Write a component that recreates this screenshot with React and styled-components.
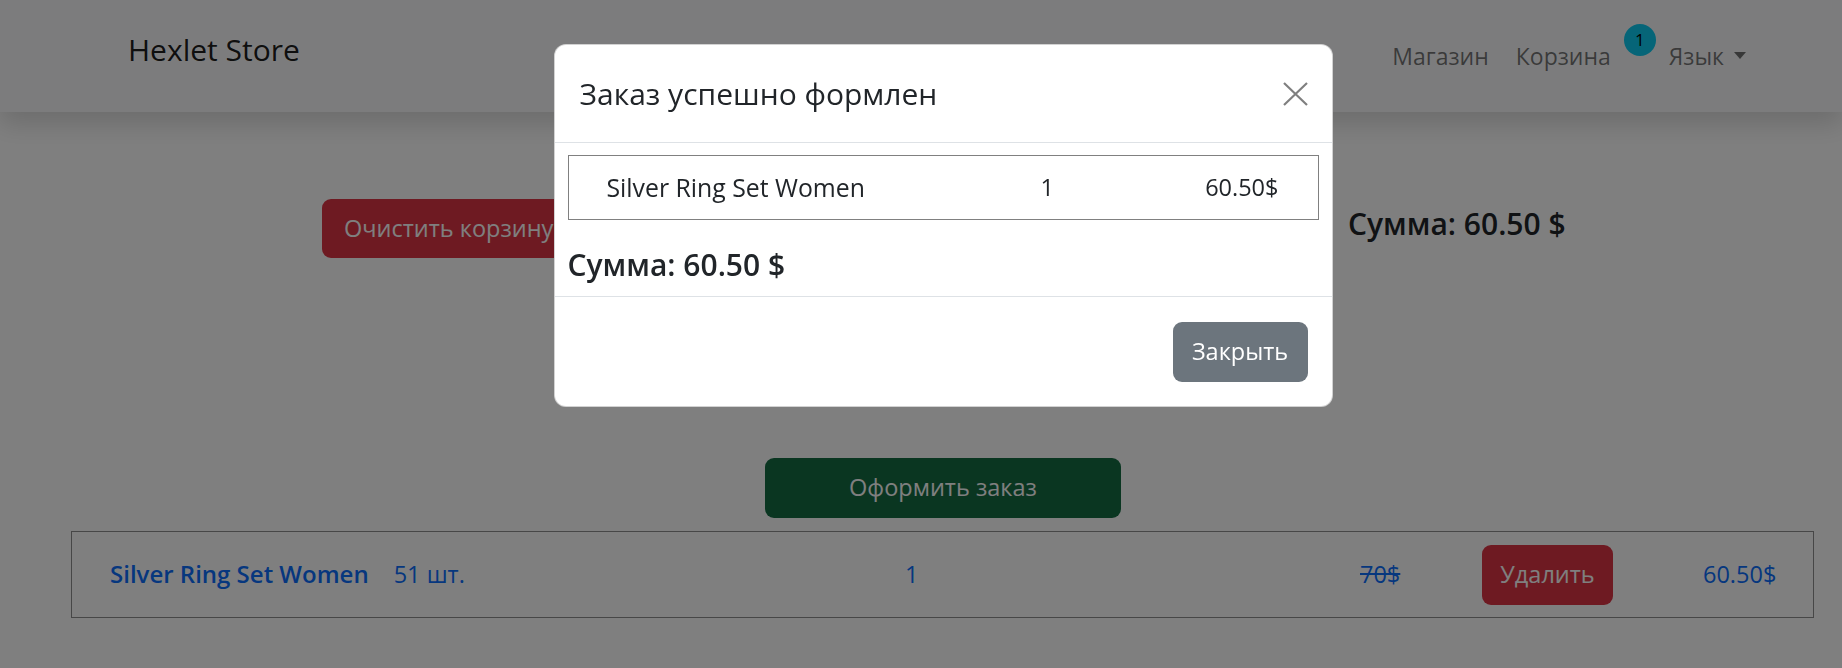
import React from 'react';
import styled, { createGlobalStyle } from 'styled-components';

const GlobalStyle = createGlobalStyle`
  html, body { margin: 0; padding: 0; }
  *, *::before, *::after { box-sizing: border-box; }
  body {
    font-family: "Open Sans", "Noto Sans", sans-serif;
    font-size: 23.5px;
    line-height: 1.5;
    color: #212529;
    background: #fff;
  }
`;

const Navbar = styled.nav`
  position: relative;
  z-index: 1;
  height: 112px;
  display: flex;
  align-items: center;
  padding: 0 96px 0 128px;
  background: #f8f9fa;
  box-shadow: 0 12px 24px rgba(0, 0, 0, 0.15);
`;

const Brand = styled.a`
  margin-bottom: 14px;
  font-size: 30px;
  color: rgba(0, 0, 0, 0.9);
  text-decoration: none;
`;

const NavList = styled.div`
  margin-left: auto;
  display: flex;
  align-items: center;
  gap: 27px;
`;

const NavLink = styled.a`
  position: relative;
  font-size: 23px;
  color: rgba(0, 0, 0, 0.55);
  text-decoration: none;
  margin-right: ${(p) => p.$mr || 0}px;
`;

const Badge = styled.span`
  position: absolute;
  left: calc(100% + 13px);
  top: -15px;
  width: 32px;
  height: 32px;
  border-radius: 50%;
  background: #0dcaf0;
  color: #000;
  font-size: 17px;
  display: flex;
  align-items: center;
  justify-content: center;
`;

const Dropdown = styled(NavLink)`
  display: inline-flex;
  align-items: center;
  &::after {
    content: "";
    margin-left: 10px;
    margin-top: -2px;
    border-top: 7px solid currentColor;
    border-left: 6.5px solid transparent;
    border-right: 6.5px solid transparent;
  }
`;

const TopRow = styled.div`
  display: grid;
  grid-template-columns: 1026px auto;
  align-items: center;
  padding: 87px 0 0 322px;
`;

const Button = styled.button`
  font-family: inherit;
  font-size: 23.5px;
  line-height: 1.5;
  color: #fff;
  border: 1px solid transparent;
  border-radius: 9px;
  background: ${(p) => p.$bg};
  height: ${(p) => p.$h}px;
  width: ${(p) => (p.$w ? `${p.$w}px` : 'auto')};
  padding: 0 ${(p) => p.$px || 0}px;
  cursor: pointer;
  justify-self: start;
`;

const Sum = styled.div`
  font-size: 30px;
  font-weight: 600;
  line-height: 1.2;
  margin: ${(p) => p.$m};
`;

const CheckoutRow = styled.div`
  display: flex;
  justify-content: center;
  padding-left: 44px;
  margin-top: 200px;
`;

const CartItem = styled.div`
  margin: 13px 28px 0 71px;
  height: 87px;
  border: 1px solid #8f8f8f;
  display: grid;
  grid-template-columns: 795px 455px 122px 221px auto;
  align-items: center;
  padding-left: 38px;
  color: #0d6efd;
`;

const NameGroup = styled.div`
  display: flex;
  align-items: baseline;
  gap: 25px;
`;

const ItemName = styled.a`
  font-size: 24px;
  font-weight: 600;
  color: #0d6efd;
  text-decoration: none;
`;

const OldPrice = styled.span`
  text-decoration: line-through;
`;

const Backdrop = styled.div`
  position: fixed;
  inset: 0;
  z-index: 10;
  background: rgba(0, 0, 0, 0.5);
`;

const ModalWrap = styled.div`
  position: fixed;
  inset: 0;
  z-index: 11;
  display: flex;
  justify-content: center;
  align-items: flex-start;
  padding: 44px 0 0 44px;
`;

const Dialog = styled.div`
  width: 779px;
  background: #fff;
  border: 1px solid rgba(0, 0, 0, 0.175);
  border-radius: 12px;
`;

const ModalHeader = styled.div`
  height: 98px;
  display: flex;
  align-items: center;
  padding: 0 24px 0 25px;
  border-bottom: 1px solid #dee2e6;
`;

const ModalTitle = styled.h5`
  margin: 0;
  font-size: 30px;
  font-weight: 500;
  line-height: 1.2;
`;

const CloseX = styled.button`
  margin-left: auto;
  padding: 0;
  border: 0;
  background: none;
  width: 25px;
  height: 24px;
  display: flex;
  cursor: pointer;
`;

const ModalBody = styled.div`
  padding: 12px 13px 0;
`;

const OrderTable = styled.div`
  height: 65px;
  border: 1px solid #808080;
  display: grid;
  grid-template-columns: 434px 1fr auto;
  align-items: center;
  padding: 0 39px 0 38px;
`;

const OrderName = styled.span`
  font-size: 24.8px;
`;

const ModalFooter = styled.div`
  display: flex;
  justify-content: flex-end;
  padding: 25px 24px 24px;
  border-top: 1px solid #dee2e6;
`;

export default function App() {
  return (
    <>
      <GlobalStyle />
      <Navbar>
        <Brand href="#">Hexlet Store</Brand>
        <NavList>
          <NavLink href="#">Магазин</NavLink>
          <NavLink href="#" $mr={31}>
            Корзина
            <Badge>1</Badge>
          </NavLink>
          <Dropdown href="#">Язык</Dropdown>
        </NavList>
      </Navbar>
      <main>
        <TopRow>
          <Button $bg="#dc3545" $h={59} $px={21}>Очистить корзину</Button>
          <Sum $m="0 0 9px">Сумма: 60.50 $</Sum>
        </TopRow>
        <CheckoutRow>
          <Button $bg="#146c43" $h={60} $w={356}>Оформить заказ</Button>
        </CheckoutRow>
        <CartItem>
          <NameGroup>
            <ItemName href="#">Silver Ring Set Women</ItemName>
            <span>51 шт.</span>
          </NameGroup>
          <span>1</span>
          <OldPrice>70$</OldPrice>
          <Button $bg="#dc3545" $h={60} $w={131}>Удалить</Button>
          <span>60.50$</span>
        </CartItem>
      </main>
      <Backdrop />
      <ModalWrap>
        <Dialog>
          <ModalHeader>
            <ModalTitle>Заказ успешно формлен</ModalTitle>
            <CloseX aria-label="Close">
              <svg width="25" height="24" viewBox="0 0 25 24">
                <path d="M1 1 L24 23 M24 1 L1 23" stroke="#000" strokeOpacity="0.5" strokeWidth="2.2" fill="none" />
              </svg>
            </CloseX>
          </ModalHeader>
          <ModalBody>
            <OrderTable>
              <OrderName>Silver Ring Set Women</OrderName>
              <span>1</span>
              <span>60.50$</span>
            </OrderTable>
            <Sum $m="27px 0 13px">Сумма: 60.50 $</Sum>
          </ModalBody>
          <ModalFooter>
            <Button $bg="#6c757d" $h={60} $w={135}>Закрыть</Button>
          </ModalFooter>
        </Dialog>
      </ModalWrap>
    </>
  );
}
